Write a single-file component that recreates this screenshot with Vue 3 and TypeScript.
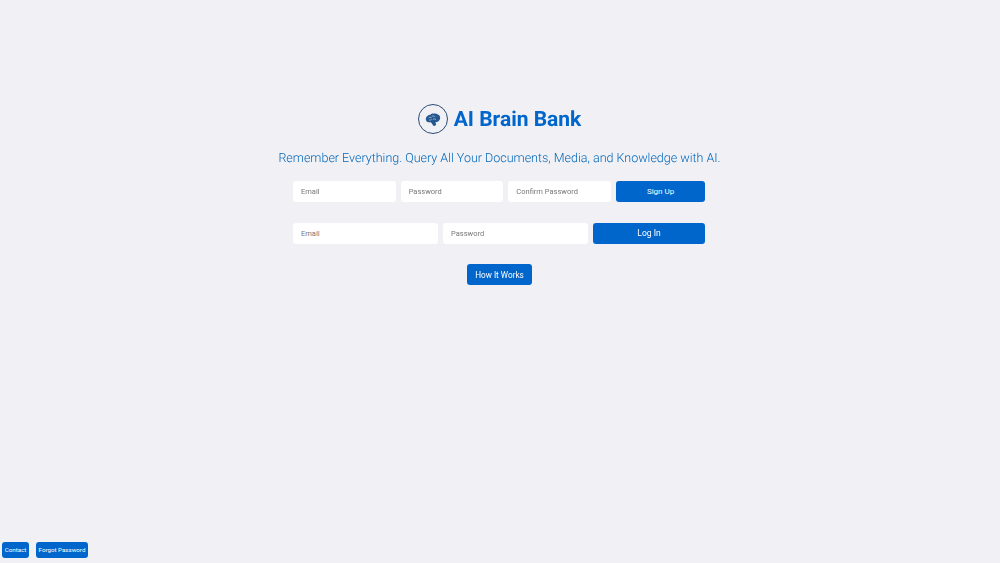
<script setup lang="ts">
const signUp: string[] = ['Email', 'Password', 'Confirm Password']
const logIn: string[] = ['Email', 'Password']
</script>

<template>
  <div class="page">
    <main class="main">
      <header class="brand">
        <span class="logo">
          <svg width="17" height="17" viewBox="0 0 24 24" fill="#24588f">
            <path d="M13.500 3.500c-2 0-3.600.7-4.600 1.800-2.900.2-5.900 2.300-6.300 5.300-.4 2.900 1.300 5 4 5.400h2.300c.7 0 1.300.3 1.700.8l2.300 3.700c.4.600 1.100.8 1.700.5l1.900-1c.6-.3.800-1 .5-1.600l-1-2.300c2.800-.3 6.800-2.400 6.800-6.600 0-3.400-3.500-5.800-9.300-5.800z"/>
            <path d="M7 9.500c1-1 2.300-1 3.300-.2M11.500 7.300c1.500-.6 3-.2 4 .8M13 11.500c1.200-.6 2.700-.4 3.700.6M7.500 12.800c1 .4 2 .2 2.800-.5" fill="none" stroke="#b9cbe0" stroke-width="1.100" stroke-linecap="round"/>
          </svg>
        </span>
        <h1 class="title">AI Brain Bank</h1>
      </header>
      <p class="tagline">Remember Everything. Query All Your Documents, Media, and Knowledge with AI.</p>
      <form class="row row-signup" @submit.prevent>
        <input v-for="p in signUp" :key="p" class="field" :placeholder="p" />
        <button class="btn btn-signup">Sign Up</button>
      </form>
      <form class="row row-login" @submit.prevent>
        <input v-for="p in logIn" :key="p" class="field" :placeholder="p" />
        <button class="btn btn-login">Log In</button>
      </form>
      <button class="btn btn-how">How It Works</button>
    </main>
    <footer class="footer">
      <button class="btn btn-contact">Contact</button>
      <button class="btn btn-forgot">Forgot Password</button>
    </footer>
  </div>
</template>

<style>
html, body { margin: 0; background: #f0f0f5; }
</style>

<style scoped>
.page {
  height: 563px;
  display: flex;
  flex-direction: column;
  justify-content: space-between;
  font-family: Roboto, "Liberation Sans", sans-serif;
  text-rendering: geometricPrecision;
  background: #f0f0f5;
  overflow: hidden;
}
.main {
  display: flex;
  flex-direction: column;
  align-items: center;
  padding-top: 103px;
  padding-right: 1px;
  will-change: opacity;
}
.brand {
  display: flex;
  align-items: center;
  gap: 6px;
  height: 32px;
}
.logo {
  width: 30px;
  height: 30px;
  box-sizing: border-box;
  border: 1.7px solid #2b4c73;
  border-radius: 50%;
  display: flex;
  align-items: center;
  justify-content: center;
}
.title {
  margin: 2px 0 0;
  font-size: 21px;
  font-weight: 700;
  color: #0066cc;
}
.tagline {
  margin: 15px 0 0;
  font-size: 12.5px;
  line-height: 18px;
  font-weight: 300;
  color: #0066b8;
}
.row {
  width: 412px;
  margin-right: 1px;
  display: flex;
  gap: 5px;
}
.row-signup { margin-top: 13px; }
.row-login { margin-top: 21px; }
.field {
  flex: 1 1 0;
  min-width: 0;
  height: 21px;
  box-sizing: border-box;
  border: none;
  outline: none;
  border-radius: 3px;
  background: #fff;
  padding: 0 8px 1px;
  font-family: inherit;
  font-size: 7.5px;
  color: #333;
}
.field::placeholder { color: #777; opacity: 1; }
.btn {
  border: none;
  border-radius: 3px;
  background: #0066cc;
  color: #fff;
  font-family: inherit;
  padding: 0;
  height: 21px;
}
.btn-signup { width: 89px; font-size: 8px; }
.btn-login { width: 112px; font-size: 8.5px; padding-bottom: 1px; }
.btn-how {
  margin-top: 20px;
  width: 65px;
  font-size: 8.2px;
}
.footer {
  display: flex;
  gap: 7px;
  padding: 0 0 5px 2px;
  will-change: opacity;
}
.btn-contact, .btn-forgot {
  height: 16px;
  font-size: 6.2px;
}
.btn-contact { width: 27px; }
.btn-forgot { width: 52px; }
</style>
